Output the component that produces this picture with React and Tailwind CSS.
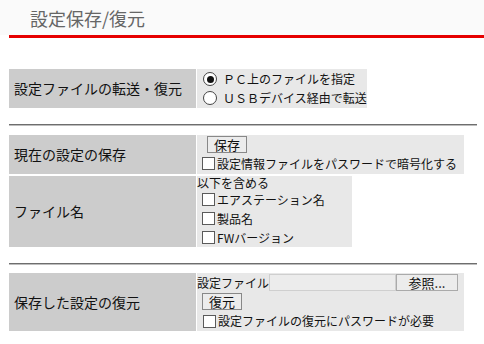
const font = { fontFamily: '"Noto Sans CJK JP", "DejaVu Sans", sans-serif' };

function Check({ label, className = '' }) {
  return (
    <div className={`flex items-center h-[19px] whitespace-nowrap ${className}`}>
      <span className="w-[13px] h-[13px] border border-[#5a5a5a] bg-white mr-[2px] shrink-0" />
      <span>{label}</span>
    </div>
  );
}

function Radio({ label, checked }) {
  return (
    <div className="flex items-center h-[19px] whitespace-nowrap">
      <span className="w-[14px] h-[14px] rounded-full border border-[#444] bg-white flex items-center justify-center mr-[6px] shrink-0">
        {checked && <span className="w-[7px] h-[7px] rounded-full bg-[#111]" />}
      </span>
      <span>{label}</span>
    </div>
  );
}

function Btn({ children, className = '' }) {
  return (
    <span className={`inline-flex items-center justify-center h-[17px] px-[6px] border border-[#888] bg-[#ececec] text-[13px] leading-none ${className}`}>
      {children}
    </span>
  );
}

function Rule() {
  return <div className="ml-[9px] mr-[7px] h-[2px] border-t border-[#6e6e6e] border-b border-b-[#bdbdbd]" />;
}

export default function App() {
  return (
    <div className="w-[484px] h-[344px] bg-white text-[#111] overflow-hidden" style={font}>
      <div className="h-[35px] bg-[#fafafa] flex items-center pl-[30px] text-[18px] text-[#666] pt-[2px]">
        設定保存/復元
      </div>
      <div className="ml-[9px] h-[3px] bg-[#e60000]" />

      <div className="mt-[31px] ml-[9px] flex h-[39px]">
        <div className="w-[187px] bg-[#cccccc] flex items-center pl-[5px] text-[14px]">設定ファイルの転送・復元</div>
        <div className="ml-[1px] w-[170px] bg-[#e8e8e8] flex flex-col justify-center pl-[6px] text-[12px]">
          <Radio label="ＰＣ上のファイルを指定" checked />
          <Radio label="ＵＳＢデバイス経由で転送" />
        </div>
      </div>

      <div className="mt-[16px]"><Rule /></div>

      <div className="mt-[9px] ml-[9px] flex flex-col gap-[2px]">
        <div className="flex h-[39px]">
          <div className="w-[187px] bg-[#cccccc] flex items-center pl-[5px] text-[14px]">現在の設定の保存</div>
          <div className="ml-[1px] w-[267px] bg-[#e8e8e8] flex flex-col justify-center text-[12px]">
            <div className="pl-[10px]"><Btn>保存</Btn></div>
            <Check label="設定情報ファイルをパスワードで暗号化する" className="pl-[5px]" />
          </div>
        </div>
        <div className="flex h-[71px]">
          <div className="w-[187px] bg-[#cccccc] flex items-center pl-[5px] text-[14px]">ファイル名</div>
          <div className="ml-[1px] w-[155px] bg-[#e8e8e8] flex flex-col justify-center text-[12px]">
            <div className="h-[14px] flex items-center">以下を含める</div>
            <Check label="エアステーション名" className="pl-[5px]" />
            <Check label="製品名" className="pl-[5px]" />
            <Check label="FWバージョン" className="pl-[5px]" />
          </div>
        </div>
      </div>

      <div className="mt-[16px]"><Rule /></div>

      <div className="mt-[8px] ml-[9px] flex h-[58px]">
        <div className="w-[187px] bg-[#cccccc] flex items-center pl-[5px] text-[14px]">保存した設定の復元</div>
        <div className="ml-[1px] w-[267px] bg-[#e8e8e8] flex flex-col justify-center text-[12px]">
          <div className="flex items-center h-[18px]">
            <span>設定ファイル</span>
            <span className="w-[127px] h-[17px] border border-[#cfcfcf] bg-[#ececec]" />
            <Btn className="w-[62px] border-[#aaa]">参照...</Btn>
          </div>
          <div className="pl-[5px] h-[20px] flex items-center"><Btn>復元</Btn></div>
          <Check label="設定ファイルの復元にパスワードが必要" className="pl-[6px]" />
        </div>
      </div>
    </div>
  );
}
